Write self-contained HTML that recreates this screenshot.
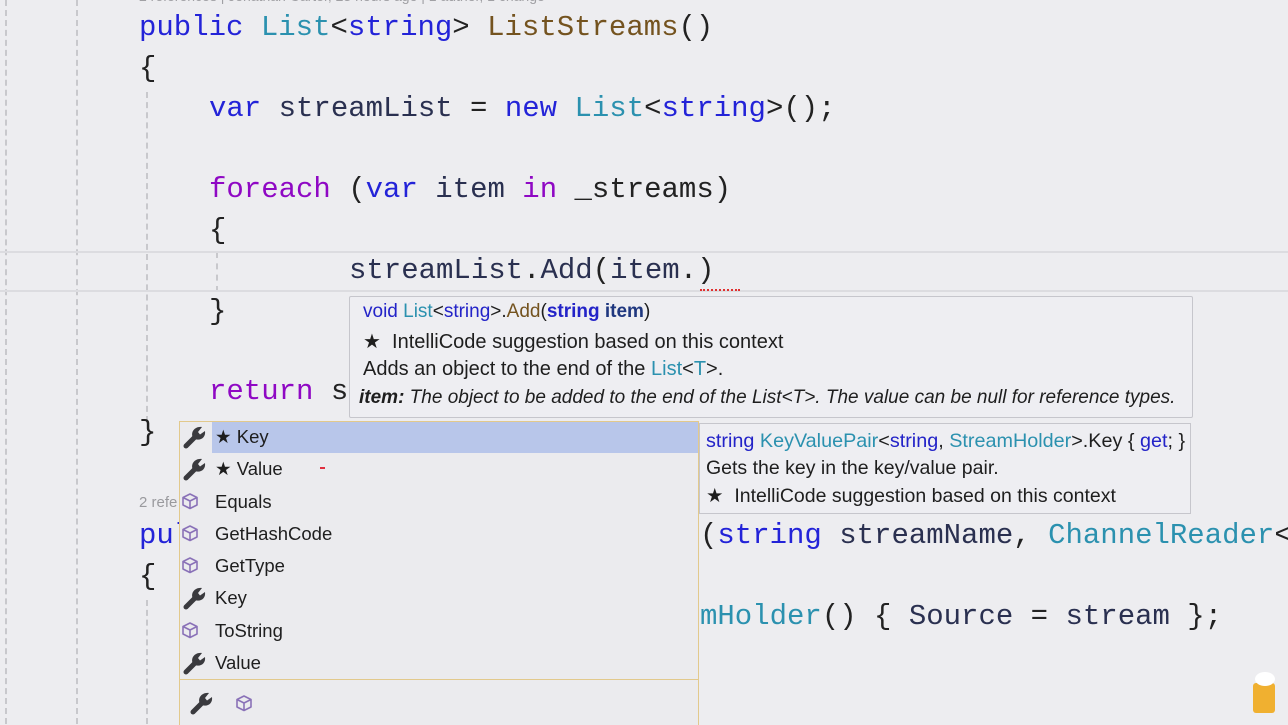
<!DOCTYPE html>
<html><head><meta charset="utf-8"><style>
body{margin:0;width:1288px;height:724px;overflow:hidden;background:#ededf0;position:relative;font-family:"Liberation Sans",sans-serif}
.c{position:absolute;font-family:"Liberation Mono",monospace;font-size:29px;line-height:40px;color:#222;white-space:pre}
.k{color:#2323d8}.t{color:#2b91af}.m{color:#74531f}.p{color:#8f08c4}.v{color:#2a3050}
.g{position:absolute;width:0;border-left:2px dashed #c8c8cc}
.ui{position:absolute;font-size:20px;color:#1e1e1e;white-space:pre}
.row{position:absolute;left:0;width:518px;height:32px;line-height:32px;font-size:18.5px}
.row span.n{position:absolute;left:35px}
.ic{position:absolute;left:2px;top:4px}
</style></head><body>
<div class="g" style="left:5px;top:0;height:724px"></div>
<div class="g" style="left:76px;top:0;height:724px"></div>
<div class="g" style="left:146px;top:92px;height:330px"></div>
<div class="g" style="left:216px;top:252px;height:40px"></div>
<div class="g" style="left:146px;top:600px;height:124px"></div>
<div style="position:absolute;left:0;top:251px;width:1288px;height:37px;border-top:2px solid #dcdce0;border-bottom:2px solid #dcdce0"></div>
<div class="ui" style="left:139px;top:-12px;font-size:14px;color:#a0a0a4">2 references | Jonathan Carter, 23 hours ago | 1 author, 1 change</div>
<div class="c" style="left:139px;top:8px"><span class="k">public</span> <span class="t">List</span>&lt;<span class="k">string</span>&gt; <span class="m">ListStreams</span>()</div>
<div class="c" style="left:139px;top:49px">{</div>
<div class="c" style="left:209px;top:89px"><span class="k">var</span> <span class="v">streamList</span> = <span class="k">new</span> <span class="t">List</span>&lt;<span class="k">string</span>&gt;();</div>
<div class="c" style="left:209px;top:170px"><span class="p">foreach</span> (<span class="k">var</span> <span class="v">item</span> <span class="p">in</span> _streams)</div>
<div class="c" style="left:209px;top:211px">{</div>
<div class="c" style="left:349px;top:251px"><span class="v">streamList</span>.<span class="v">Add</span>(<span class="v">item</span>.)</div>
<div style="position:absolute;left:700px;top:286px;width:40px;height:3px;border-bottom:2px dotted #e03030"></div>
<div class="c" style="left:209px;top:292px">}</div>
<div class="c" style="left:209px;top:372px"><span class="p">return</span> s</div>
<div class="c" style="left:139px;top:413px">}</div>
<div class="ui" style="left:139px;top:494px;font-size:15px;color:#9a9a9e">2 refe</div>
<div class="c" style="left:139px;top:516px"><span class="k">pul</span></div>
<div class="c" style="left:139px;top:557px">{</div>
<div class="c" style="left:700px;top:516px">(<span class="k">string</span> <span class="v">streamName</span>, <span class="t">ChannelReader</span>&lt;</div>
<div class="c" style="left:700px;top:597px"><span class="t">mHolder</span>() { <span class="v">Source</span> = <span class="v">stream</span> };</div>

<div style="position:absolute;left:349px;top:296px;width:842px;height:120px;background:#eeeef2;border:1px solid #c6c6cc;border-radius:2px"></div>
<div class="ui" style="left:363px;top:301px;font-size:19px"><span style="color:#2323c8">void</span> <span class="t">List</span>&lt;<span style="color:#2323c8">string</span>&gt;.<span class="m">Add</span>(<b style="color:#2323c8">string</b> <b style="color:#1f377f">item</b>)</div>
<div class="ui" style="left:363px;top:329px">★  IntelliCode suggestion based on this context</div>
<div class="ui" style="left:363px;top:358px">Adds an object to the end of the <span class="t">List</span>&lt;<span class="t">T</span>&gt;.</div>
<div class="ui" style="left:359px;top:387px;font-style:italic;font-size:19px"><b>item:</b> The object to be added to the end of the List&lt;T&gt;. The value can be null for reference types.</div>

<div style="position:absolute;left:179px;top:421px;width:518px;height:303px;background:#ebebee;border:1px solid #e2c98c;border-bottom:none">
<div style="position:absolute;left:32px;top:0;width:486px;height:31px;background:#b8c6ea"></div>
<div style="position:absolute;left:0;top:257px;width:518px;height:1px;background:#e2c98c"></div>
</div>

<div style="position:absolute;left:699px;top:423px;width:490px;height:89px;background:#eeeef2;border:1px solid #c6c6cc"></div>
<div class="ui" style="left:706px;top:430px;font-size:19.8px"><span style="color:#2323c8">string</span> <span class="t">KeyValuePair</span>&lt;<span style="color:#2323c8">string</span>, <span class="t">StreamHolder</span>&gt;.Key { <span style="color:#2323c8">get</span>; }</div>
<div class="ui" style="left:706px;top:457px;font-size:19.5px">Gets the key in the key/value pair.</div>
<div class="ui" style="left:706px;top:484px;font-size:19.5px">★  IntelliCode suggestion based on this context</div>

<svg width="0" height="0" style="position:absolute"><defs>
<g id="w"><path d="M4 21 L13 12" stroke="#3a3a3e" stroke-width="5" stroke-linecap="round"/><path d="M11 13 C8 7 13 1 20 2 L16 7 L18 9.5 L23 6 C24 13 18 16 13 14 Z" fill="#3a3a3e"/></g>
<g id="b"><path d="M9 2 L16 5.5 L16 13 L9 16.5 L2 13 L2 5.5 Z M2 5.5 L9 9 L16 5.5 M9 9 L9 16.5" fill="none" stroke="#8a72b8" stroke-width="1.6" stroke-linejoin="round"/></g>
</defs></svg>
<div style="position:absolute;left:180px;top:421px;width:518px;height:260px" class="ui">
<div class="row" style="top:0"><svg class="ic" width="26" height="24"><use href="#w"/></svg><span class="n">★ Key</span></div>
<div class="row" style="top:32px"><svg class="ic" width="26" height="24"><use href="#w"/></svg><span class="n">★ Value</span><span style="position:absolute;left:140px;top:14px;width:5px;height:2px;background:#e03040"></span></div>
<div class="row" style="top:65px"><svg class="ic" width="20" height="20" style="left:1px;top:6px"><use href="#b"/></svg><span class="n">Equals</span></div>
<div class="row" style="top:97px"><svg class="ic" width="20" height="20" style="left:1px;top:6px"><use href="#b"/></svg><span class="n">GetHashCode</span></div>
<div class="row" style="top:129px"><svg class="ic" width="20" height="20" style="left:1px;top:6px"><use href="#b"/></svg><span class="n">GetType</span></div>
<div class="row" style="top:161px"><svg class="ic" width="26" height="24"><use href="#w"/></svg><span class="n">Key</span></div>
<div class="row" style="top:194px"><svg class="ic" width="20" height="20" style="left:1px;top:6px"><use href="#b"/></svg><span class="n">ToString</span></div>
<div class="row" style="top:226px"><svg class="ic" width="26" height="24"><use href="#w"/></svg><span class="n">Value</span></div>
</div>
<svg style="position:absolute;left:189px;top:691px" width="26" height="24"><use href="#w"/></svg>
<svg style="position:absolute;left:235px;top:694px" width="20" height="20"><use href="#b"/></svg>

<div style="position:absolute;left:1253px;top:683px;width:22px;height:30px;background:#f0b030;border-radius:3px"></div>
<div style="position:absolute;left:1255px;top:672px;width:20px;height:14px;background:#fff;border-radius:50%"></div>
</body></html>
